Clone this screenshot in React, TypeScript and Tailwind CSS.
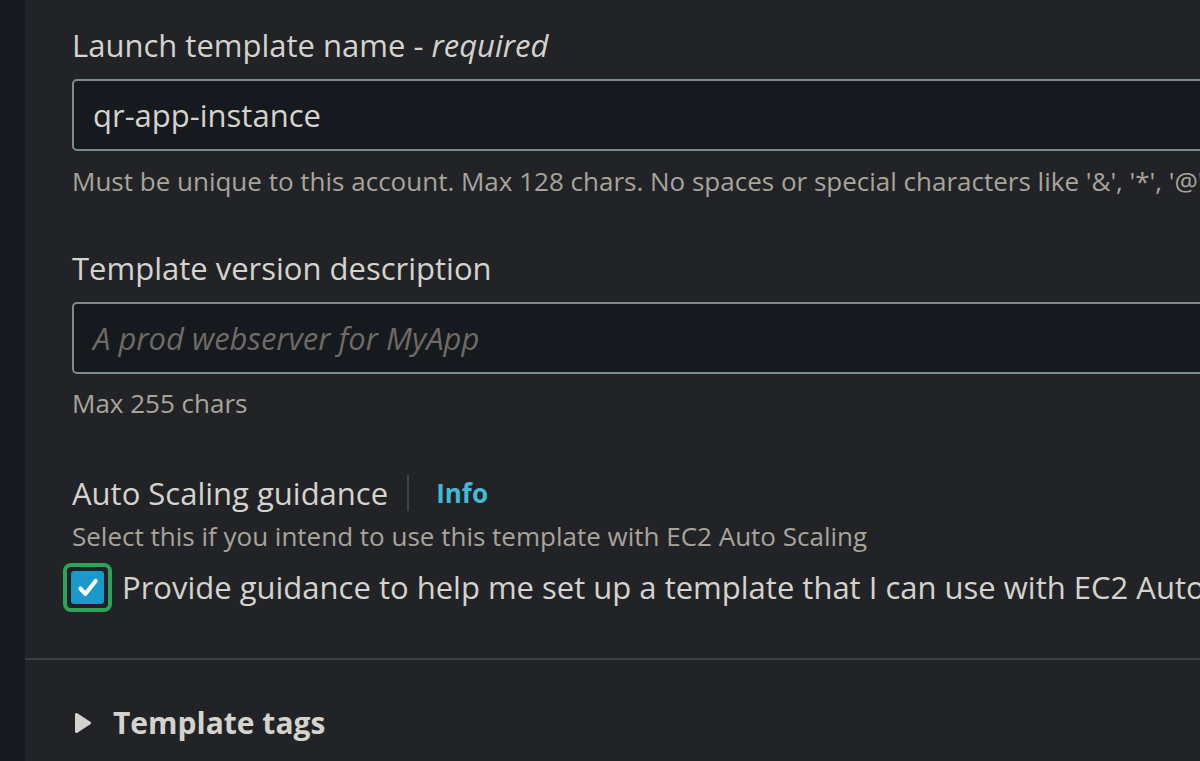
export default function App() {
  return (
    <div
      className="flex h-[761px] w-[1200px] overflow-hidden bg-[#16191f] font-medium text-[#d5d3cd]"
      style={{ fontFamily: '"Open Sans", "Noto Sans", sans-serif' }}
    >
      <div className="w-[25px] shrink-0" />
      <main className="flex min-w-0 flex-1 flex-col bg-[#222326]">
        <div className="flex flex-col pl-[47px] pt-[24px]">
          <label className="text-[31px] leading-[42px]">
            Launch template name - <i>required</i>
          </label>
          <div className="mt-[13px] flex h-[72px] w-[1200px] items-center rounded-[5px] border-2 border-[#7b8b8f] bg-[#16191e] px-[19px] text-[31px]">
            qr-app-instance
          </div>
          <p className="mt-[13px] whitespace-nowrap text-[26px] leading-[34px] text-[#a8a49c]">
            Must be unique to this account. Max 128 chars. No spaces or special characters like '&amp;', '*', '@'.
          </p>

          <label className="mt-[49px] text-[31px] leading-[42px]">
            Template version description
          </label>
          <div className="mt-[13px] flex h-[72px] w-[1200px] items-center rounded-[5px] border-2 border-[#7b8b8f] bg-[#16191e] px-[19px] text-[31px] italic text-[#6e6a65]">
            A prod webserver for MyApp
          </div>
          <p className="mt-[12px] text-[26px] leading-[34px] text-[#a8a49c]">
            Max 255 chars
          </p>

          <div className="mt-[52px] flex items-center">
            <span className="text-[31px] leading-[42px]">Auto Scaling guidance</span>
            <span className="ml-[19px] mr-[27px] h-[36px] w-[2px] bg-[#3d434b]" />
            <span className="text-[26px] font-bold text-[#44b9d6]">Info</span>
          </div>
          <p className="mt-[5px] whitespace-nowrap text-[26px] leading-[34px] text-[#a8a49c]">
            Select this if you intend to use this template with EC2 Auto Scaling
          </p>
          <div className="mt-[10px] -ml-[9px] flex items-center">
            <span className="flex h-[49px] w-[49px] shrink-0 items-center justify-center rounded-[8px] border-4 border-[#2ba35a] bg-[#1f2125]">
              <span className="flex h-[33px] w-[33px] items-center justify-center rounded-[3px] bg-[#1b98cc]">
                <svg viewBox="0 0 24 24" className="h-[26px] w-[26px]" fill="none" stroke="white" strokeWidth="3.8" strokeLinecap="round" strokeLinejoin="round">
                  <path d="M5 12.5l4.5 5L19 5.5" />
                </svg>
              </span>
            </span>
            <span className="ml-[10px] whitespace-nowrap text-[31px]">
              Provide guidance to help me set up a template that I can use with EC2 Auto Scaling
            </span>
          </div>
        </div>

        <div className="mt-[46px] h-[2px] bg-[#3b4048]" />

        <div className="flex items-center pl-[49px] pt-[40px]">
          <svg viewBox="0 0 18 22" className="h-[22px] w-[18px]" fill="#d5d3cd">
            <path d="M1 2.5v17a1.5 1.5 0 0 0 2.3 1.2l13-8.5a1.5 1.5 0 0 0 0-2.4l-13-8.5A1.5 1.5 0 0 0 1 2.5z" />
          </svg>
          <span className="ml-[21px] text-[30px] font-bold">Template tags</span>
        </div>
      </main>
    </div>
  );
}
